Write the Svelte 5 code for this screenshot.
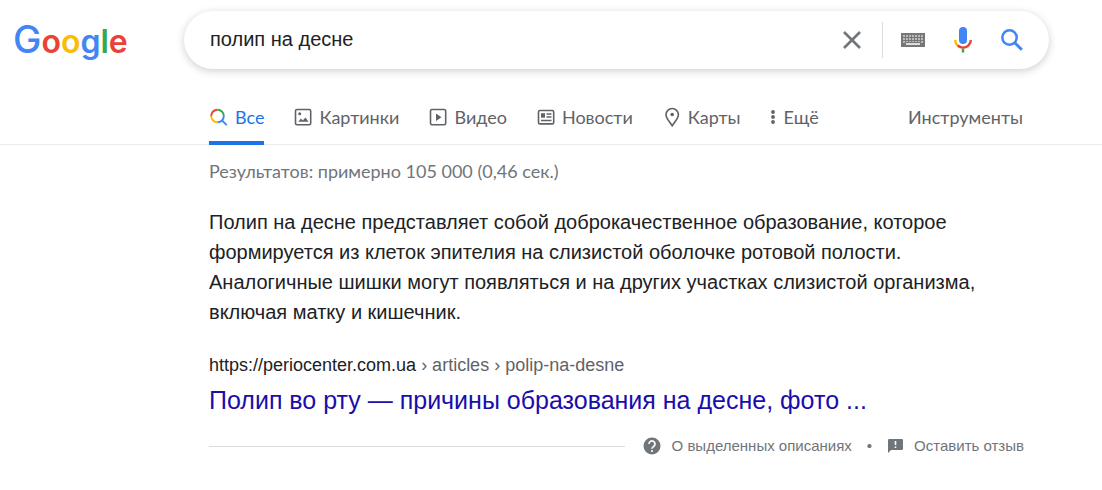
<script>
    let query = $state("полип на десне");
    let activeTab = $state("all");
    let inputEl;

    const tabs = [
        { id: "all", label: "Все" },
        { id: "images", label: "Картинки" },
        { id: "video", label: "Видео" },
        { id: "news", label: "Новости" },
        { id: "maps", label: "Карты" },
    ];

    const snippet =
        "Полип на десне представляет собой доброкачественное образование, которое формируется из клеток эпителия на слизистой оболочке ротовой полости. Аналогичные шишки могут появляться и на других участках слизистой организма, включая матку и кишечник.";

    // Key positions on the keyboard icon
    const keyRows = [2, 5, 8];
    const keyCols = [2, 5, 8, 11, 14, 17, 20];

    function clearQuery() {
        query = "";
        inputEl?.focus();
    }

    function selectTab(event, id) {
        event.preventDefault();
        activeTab = id;
    }
</script>

<header class="header">
    <a class="logo" href="/" aria-label="Google">
        <svg width="120" height="56" viewBox="0 0 120 56">
            <text x="0" y="41"
                ><tspan class="capital" fill="#4285f4">G</tspan><tspan fill="#ea4335">o</tspan><tspan
                    fill="#fbbc05">o</tspan
                ><tspan fill="#4285f4">g</tspan><tspan fill="#34a853">l</tspan><tspan
                    fill="#ea4335">e</tspan
                ></text
            >
        </svg>
    </a>

    <form class="search-box" role="search" onsubmit={(e) => e.preventDefault()}>
        <input
            class="search-input"
            type="text"
            aria-label="Найти"
            autocomplete="off"
            bind:value={query}
            bind:this={inputEl}
        />
        <button class="icon-btn clear-btn" type="button" aria-label="Очистить" onclick={clearQuery}>
            <svg width="18" height="18" viewBox="0 0 18 18" fill="none" stroke="#70757a" stroke-width="2.6">
                <path d="M1 1l16 16M17 1L1 17" />
            </svg>
        </button>
        <span class="separator"></span>
        <button class="icon-btn keyboard-btn" type="button" aria-label="Экранная клавиатура">
            <svg width="24" height="14" viewBox="0 0 24 14">
                <rect width="24" height="14" fill="#777" />
                {#each keyRows as y}
                    {#each keyCols as x}
                        <rect {x} {y} width="2" height="2" fill="#bbb" />
                    {/each}
                {/each}
                <rect x="4" y="9" width="16" height="4" fill="#777" />
                <rect x="5" y="10" width="14" height="2" fill="#ddd" />
            </svg>
        </button>
        <button class="icon-btn mic-btn" type="button" aria-label="Голосовой поиск">
            <svg width="18" height="26" viewBox="0 0 18 26" fill="none">
                <rect x="5" y="0" width="8" height="17" rx="4" fill="#4285f4" />
                <path d="M1.2 13c0 2.4 1 4.3 2.5 5.7" stroke="#fbbc05" stroke-width="2.4" />
                <path d="M3.6 18.5C5 19.8 7 20.6 9 20.6c4.4 0 7.8-3.3 7.8-7.6" stroke="#ea4335" stroke-width="2.4" />
                <path d="M9 21.5v4" stroke="#34a853" stroke-width="2.5" />
            </svg>
        </button>
        <button class="icon-btn" type="submit" aria-label="Поиск">
            <svg width="24" height="24" viewBox="0 0 24 24" fill="none" stroke="#4285f4">
                <circle cx="9.5" cy="9.5" r="7.2" stroke-width="2.5" />
                <path d="M14.5 14.5l7.3 7.3" stroke-width="3" />
            </svg>
        </button>
    </form>
</header>

<nav class="tab-bar">
    <div class="tabs">
        {#each tabs as tab}
            <a
                class="tab"
                class:active={activeTab === tab.id}
                href="#{tab.id}"
                onclick={(e) => selectTab(e, tab.id)}
            >
                <svg width="20" height="20" viewBox="0 0 20 20" fill="none" stroke="#5f6368" stroke-width="1.6">
                    {#if tab.id === "all"}
                        <g stroke-width="1.9">
                            <path d="M2.2 9a6.3 6.3 0 0 1 6.3-6.3" stroke="#ea4335" />
                            <path d="M8.5 2.7a6.3 6.3 0 0 1 6.3 6.3" stroke="#34a853" />
                            <path d="M8.5 15.3a6.3 6.3 0 0 1-6.3-6.3" stroke="#fbbc05" />
                            <path d="M14.8 9a6.3 6.3 0 0 1-6.3 6.3M12.8 13.3l5 4.8" stroke="#4285f4" />
                        </g>
                    {:else if tab.id === "images"}
                        <rect x="2.5" y="2.5" width="15.2" height="15.2" rx="1.5" />
                        <circle cx="6.7" cy="6.7" r="1.5" fill="#5f6368" stroke="none" />
                        <path d="M5.3 14.7l2.6-3.2 1.8 2 2.8-3 3 4.2z" fill="#5f6368" stroke="none" />
                    {:else if tab.id === "video"}
                        <rect x="2.5" y="2.5" width="15.2" height="15.2" rx="1.5" />
                        <path d="M8 6.5v7.4l5.5-3.7z" fill="#5f6368" stroke="none" />
                    {:else if tab.id === "news"}
                        <rect x="2.5" y="3.5" width="15.2" height="13.4" rx="1.5" />
                        <path d="M5 6.2h4v4.500h-4z" fill="#5f6368" stroke="none" />
                        <path d="M10.5 7h5M10.5 10h5M5 13.5h10.5" />
                    {:else}
                        <path d="M10.2 1.5a6.2 6.2 0 0 0-6.2 6.2c0 3.6 3 6 6.2 11 3.2-5 6.2-7.4 6.2-11a6.2 6.2 0 0 0-6.2-6.2z" />
                        <circle cx="10.2" cy="7.5" r="1.8" fill="#5f6368" stroke="none" />
                    {/if}
                </svg>
                {tab.label}
            </a>
        {/each}
        <button class="tab more" type="button">
            <svg width="6" height="20" viewBox="0 0 6 20" fill="#5f6368">
                <circle cx="3" cy="5" r="1.9" />
                <circle cx="3" cy="10" r="1.9" />
                <circle cx="3" cy="15" r="1.9" />
            </svg>
            Ещё
        </button>
        <button class="tab tools" type="button">Инструменты</button>
    </div>
</nav>

<main class="results">
    <div class="stats">Результатов: примерно 105 000 (0,46 сек.)</div>

    <p class="snippet">{snippet}</p>

    <a class="result" href="https://periocenter.com.ua/articles/polip-na-desne">
        <cite class="url">https://periocenter.com.ua <span>› articles › polip-na-desne</span></cite>
        <h3 class="title">Полип во рту — причины образования на десне, фото ...</h3>
    </a>

    <footer class="feedback">
        <span class="rule"></span>
        <a class="feedback-link" href="#about">
            <svg width="18" height="18" viewBox="0 0 18 18">
                <circle cx="9" cy="9" r="8.5" fill="#70757a" />
                <path
                    d="M6 7a3 3 0 1 1 4.8 2.3C9.7 10.2 9 10.6 9 11.8"
                    fill="none"
                    stroke="#fff"
                    stroke-width="1.7"
                />
                <circle cx="9" cy="14" r="1.1" fill="#fff" />
            </svg>
            О выделенных описаниях
        </a>
        <span class="dot">•</span>
        <a class="feedback-link" href="#feedback">
            <svg width="15" height="14" viewBox="0 0 15 14">
                <path d="M0 1.2Q0 0 1.2 0h12.6Q15 0 15 1.2v8.6Q15 11 13.8 11H3l-3 3z" fill="#70757a" />
                <path d="M7.5 2v4M7.5 7.5v1.6" stroke="#fff" stroke-width="1.6" />
            </svg>
            Оставить отзыв
        </a>
    </footer>
</main>

<style>
    :global(body) {
        margin: 0;
        background: #fff;
        color: #202124;
        font-family: "Liberation Sans", Arial, sans-serif;
    }

    a {
        color: inherit;
        text-decoration: none;
    }

    button {
        padding: 0;
        border: none;
        background: none;
        color: inherit;
        cursor: pointer;
    }

    svg {
        display: block;
        flex-shrink: 0;
    }

    .header {
        display: flex;
        align-items: center;
        padding: 11px 53px 0 13px;
    }

    .logo {
        flex: 0 0 171px;
    }

    .logo text {
        font-family: Inter, sans-serif;
        font-size: 32px;
        font-weight: 600;
    }

    .logo .capital {
        font-size: 38px;
        font-weight: 500;
    }

    .search-box {
        display: flex;
        flex: 1;
        align-items: center;
        box-sizing: border-box;
        height: 58px;
        max-width: 866px;
        padding: 0 25px 0 26px;
        border-radius: 29px;
        box-shadow: 0 2px 7px 1px rgba(64, 60, 67, 0.2);
    }

    .search-input {
        flex: 1;
        min-width: 0;
        padding: 0 0 2px;
        border: none;
        outline: none;
        background: none;
        color: #202124;
        font: 20px "Liberation Sans", Arial, sans-serif;
    }

    .clear-btn {
        margin-right: 21px;
    }

    .separator {
        height: 36px;
        margin-right: 18px;
        border-left: 1px solid #dadce0;
    }

    .keyboard-btn {
        margin-right: 29px;
    }

    .mic-btn {
        margin-right: 28px;
    }

    .tab-bar {
        margin-top: 21px;
        padding: 0 79px 0 209px;
        border-bottom: 1px solid #ebebeb;
    }

    .tabs {
        display: flex;
        gap: 29px;
        max-width: 815px;
        height: 54px;
        color: #5f6368;
    }

    .tab {
        display: flex;
        align-items: center;
        box-sizing: border-box;
        gap: 6px;
        height: 55px;
        padding-top: 2px;
        border-bottom: 4px solid transparent;
        font: 18px Lato, "Open Sans", sans-serif;
        white-space: nowrap;
    }

    .tab.active {
        border-color: #1a73e8;
        color: #1a73e8;
    }

    .more {
        gap: 8px;
    }

    .tools {
        margin-left: auto;
    }

    .results {
        max-width: 815px;
        padding: 16px 78px 24px 209px;
    }

    .stats {
        color: #70757a;
        font: 18px/20px Lato, "Open Sans", sans-serif;
    }

    .snippet {
        max-width: 790px;
        margin: 26px 0 0;
        font-size: 20px;
        line-height: 30px;
    }

    .result {
        display: block;
        margin-top: 26px;
    }

    .url {
        display: block;
        font-size: 18px;
        font-style: normal;
        line-height: 24px;
    }

    .url span {
        color: #5f6368;
    }

    .title {
        margin: 6px 0 0;
        color: #1a0dab;
        font-size: 25px;
        font-weight: 400;
        line-height: 34px;
    }

    .feedback {
        display: flex;
        align-items: center;
        margin-top: 19px;
        color: #70757a;
        font-size: 15px;
        line-height: 20px;
    }

    .rule {
        flex: 1;
        margin-right: 18px;
        border-top: 1px solid #dadce0;
    }

    .feedback-link {
        display: flex;
        align-items: center;
        gap: 11px;
    }

    .dot {
        margin: 0 16px 0 15px;
    }
</style>
